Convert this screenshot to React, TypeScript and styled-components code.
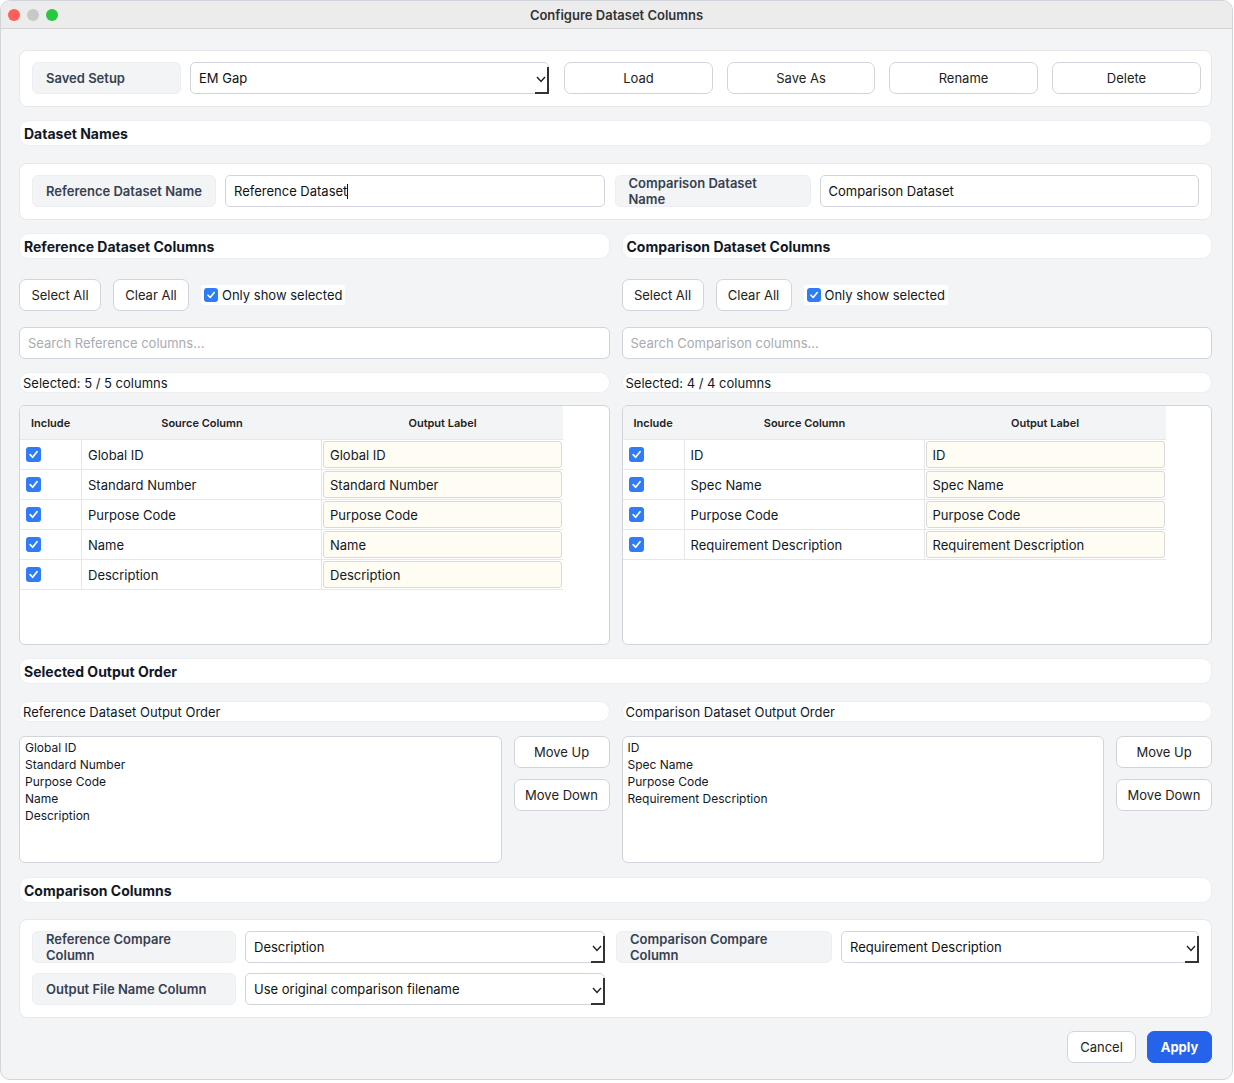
import React from "react";
import styled, { createGlobalStyle } from "styled-components";

const Global = createGlobalStyle`
  html, body { margin: 0; padding: 0; background: #fff; }
  body { font-family: Inter, "Noto Sans", sans-serif; font-size: 13px; color: #111827; }
  * { box-sizing: border-box; }
`;

const Win = styled.div`
  width: 1233px; height: 1080px; background: #f3f4f6;
  border-radius: 10px; overflow: hidden; border: 1px solid #d1d5db;
  display: flex; flex-direction: column;
`;
const TitleBar = styled.div`
  height: 28px; background: #ececec; border-bottom: 1px solid #d4d4d4;
  display: flex; align-items: center; justify-content: center; position: relative;
  font-weight: 600; font-size: 13px; color: #333;
`;
const Lights = styled.div`
  position: absolute; left: 7px; top: 8px; display: flex; gap: 7px;
`;
const Light = styled.span<{ c: string }>`
  width: 12px; height: 12px; border-radius: 50%; background: ${p => p.c};
`;
const Body = styled.div`
  padding: 21px 20px 0 18px; display: flex; flex-direction: column;
`;
const Card = styled.div<{ mt?: number; h?: number }>`
  background: #fff; border: 1px solid #e5e7eb; border-radius: 8px;
  margin-top: ${p => p.mt ?? 0}px; height: ${p => p.h}px;
  padding: 11px 12px; display: flex; flex-direction: column; gap: 10px;
`;
const Row = styled.div<{ gap?: number }>`
  display: flex; align-items: center; gap: ${p => p.gap ?? 9}px;
`;
const Header = styled.div<{ mt: number }>`
  margin-top: ${p => p.mt}px; height: 26px; background: #fff;
  border: 1px solid #eceef1; border-radius: 10px; padding: 0 4px;
  display: flex; align-items: center; font-weight: 700; font-size: 14px; color: #111827;
`;
const SubBar = styled.div<{ mt: number }>`
  margin-top: ${p => p.mt}px; height: 21px; background: #fff;
  border: 1px solid #eceef1; border-radius: 10px; padding: 0 3px;
  display: flex; align-items: center; font-size: 13px; color: #111827;
`;
const Pill = styled.div<{ w: number }>`
  width: ${p => p.w}px; flex: none; height: 32px; border-radius: 6px;
  background: #f3f4f6; border: 1px solid #eceef1; color: #374151;
  font-weight: 600; display: flex; align-items: center; padding: 0 13px;
`;
const Field = styled.div<{ w?: number; grow?: boolean }>`
  ${p => (p.grow ? "flex: 1;" : `width: ${p.w}px; flex: none;`)}
  height: 32px; border: 1px solid #d1d5db; border-radius: 5px; background: #fff;
  display: flex; align-items: center; padding: 0 8px; position: relative; color: #111;
`;
const Caret = styled.span`
  position: absolute; right: -1px; top: 4px; bottom: -1px; width: 14px;
  border-right: 2px solid #333; border-bottom: 2px solid #333; border-bottom-right-radius: 1px;
  display: flex; align-items: center; justify-content: center;
`;
const Btn = styled.button<{ w: number; h?: number; primary?: boolean }>`
  width: ${p => p.w}px; flex: none; height: ${p => p.h ?? 32}px; border-radius: 7px;
  border: 1px solid ${p => (p.primary ? "#2563eb" : "#d1d5db")};
  background: ${p => (p.primary ? "#2563eb" : "#fff")};
  color: ${p => (p.primary ? "#fff" : "#222")};
  font-weight: ${p => (p.primary ? 700 : 400)};
  font-family: inherit; font-size: 13px; padding: 0;
`;
const Cols = styled.div<{ mt: number }>`
  margin-top: ${p => p.mt}px; display: grid; grid-template-columns: 1fr 1fr; column-gap: 12px;
`;
const Col = styled.div`display: flex; flex-direction: column;`;
const Check = styled.span<{ s?: number }>`
  width: ${p => p.s ?? 14}px; height: ${p => p.s ?? 14}px; border-radius: 3px; background: #2f7cf6;
  display: inline-flex; align-items: center; justify-content: center; flex: none;
`;
const CheckLabel = styled.div`
  display: flex; align-items: center; gap: 4px; background: #fff; padding: 2px 3px; border-radius: 3px;
`;
const Search = styled.div`
  margin-top: 16px; height: 32px; border: 1px solid #d1d5db; border-radius: 6px; background: #fff;
  display: flex; align-items: center; padding: 0 8px; color: #a8abb2;
`;
const Table = styled.div`
  margin-top: 12px; height: 240px; background: #fff; border: 1px solid #d1d5db;
  border-radius: 6px; overflow: hidden;
`;
const Grid = styled.div`
  width: 543px; display: grid; grid-template-columns: 62px 240px 241px;
`;
const Th = styled.div<{ left?: boolean }>`
  height: 34px; background: #f3f4f6; font-size: 11px; font-weight: 600; color: #222;
  display: flex; align-items: center; justify-content: ${p => (p.left ? "flex-start" : "center")};
  padding-left: ${p => (p.left ? 11 : 0)}px; border-bottom: 1px solid #e5e7eb;
`;
const Td = styled.div`
  height: 30px; border-bottom: 1px solid #e5e7eb; border-right: 1px solid #e5e7eb;
  display: flex; align-items: center; padding-left: 6px;
`;
const LabelCell = styled.div`
  height: 30px; border-bottom: 1px solid #e5e7eb; padding: 1px;
`;
const LabelInput = styled.div`
  height: 100%; background: #fffcf3; border: 1px solid #d9d9d9; border-radius: 3px;
  display: flex; align-items: center; padding-left: 6px;
`;
const OrderRow = styled.div`
  margin-top: 14px; display: flex; gap: 12px; align-items: flex-start;
`;
const List = styled.div`
  flex: 1; height: 127px; background: #fff; border: 1px solid #d1d5db; border-radius: 6px;
  padding: 2px 5px; line-height: 17px; font-size: 12px;
`;
const BtnCol = styled.div`display: flex; flex-direction: column; gap: 11px;`;
const Footer = styled.div`
  margin-top: 13px; display: flex; justify-content: flex-end; gap: 11px;
`;

const Tick = ({ s = 14 }: { s?: number }) => (
  <Check s={s}>
    <svg width={s - 4} height={s - 4} viewBox="0 0 10 10">
      <path d="M2 5.2 L4.2 7.5 L8.2 2.5" stroke="#fff" strokeWidth="1.6" fill="none" strokeLinecap="round" strokeLinejoin="round" />
    </svg>
  </Check>
);

const Select = ({ w, grow, value }: { w?: number; grow?: boolean; value: string }) => (
  <Field w={w} grow={grow}>
    {value}
    <Caret>
      <svg width="10" height="7" viewBox="0 0 10 7"><path d="M1 1 L5 5.5 L9 1" stroke="#222" strokeWidth="1.4" fill="none" /></svg>
    </Caret>
  </Field>
);

const ColumnPanel = ({ kind, count, rows }: { kind: string; count: number; rows: string[] }) => (
  <Col>
    <Header mt={0} style={undefined}>{kind} Dataset Columns</Header>
    <Row gap={12} style={{ marginTop: 20 }}>
      <Btn w={82}>Select All</Btn>
      <Btn w={76}>Clear All</Btn>
      <CheckLabel><Tick />Only show selected</CheckLabel>
    </Row>
    <Search>Search {kind} columns...</Search>
    <SubBar mt={13}>Selected: {count} / {count} columns</SubBar>
    <Table>
      <Grid>
        <Th left>Include</Th><Th>Source Column</Th><Th>Output Label</Th>
        {rows.map(r => (
          <React.Fragment key={r}>
            <Td><Tick s={15} /></Td>
            <Td>{r}</Td>
            <LabelCell><LabelInput>{r}</LabelInput></LabelCell>
          </React.Fragment>
        ))}
      </Grid>
    </Table>
  </Col>
);

const OrderPanel = ({ title, rows }: { title: string; rows: string[] }) => (
  <Col>
    <SubBar mt={0}>{title}</SubBar>
    <OrderRow>
      <List>{rows.map(r => <div key={r}>{r}</div>)}</List>
      <BtnCol>
        <Btn w={96}>Move Up</Btn>
        <Btn w={96}>Move Down</Btn>
      </BtnCol>
    </OrderRow>
  </Col>
);

const refRows = ["Global ID", "Standard Number", "Purpose Code", "Name", "Description"];
const cmpRows = ["ID", "Spec Name", "Purpose Code", "Requirement Description"];

export default function App() {
  return (
    <>
      <Global />
      <Win>
        <TitleBar>
          <Lights><Light c="#fe5f57" /><Light c="#c8c8c8" /><Light c="#28c840" /></Lights>
          Configure Dataset Columns
        </TitleBar>
        <Body>
          <Card h={57}>
            <Row>
              <Pill w={149}>Saved Setup</Pill>
              <Select w={359} value="EM Gap" />
              <Row gap={14} style={{ marginLeft: 6 }}>
                <Btn w={149}>Load</Btn>
                <Btn w={148}>Save As</Btn>
                <Btn w={149}>Rename</Btn>
                <Btn w={149}>Delete</Btn>
              </Row>
            </Row>
          </Card>
          <Header mt={13}>Dataset Names</Header>
          <Card mt={17} h={57}>
            <Row>
              <Pill w={184}>Reference Dataset Name</Pill>
              <Field grow>Reference Dataset<span style={{ borderLeft: "1px solid #111", height: 15 }} /></Field>
              <Pill w={196} style={{ marginLeft: 1 }}>Comparison Dataset Name</Pill>
              <Field grow>Comparison Dataset</Field>
            </Row>
          </Card>
          <Cols mt={13}>
            <ColumnPanel kind="Reference" count={5} rows={refRows} />
            <ColumnPanel kind="Comparison" count={4} rows={cmpRows} />
          </Cols>
          <Header mt={13}>Selected Output Order</Header>
          <Cols mt={17}>
            <OrderPanel title="Reference Dataset Output Order" rows={refRows} />
            <OrderPanel title="Comparison Dataset Output Order" rows={cmpRows} />
          </Cols>
          <Header mt={14}>Comparison Columns</Header>
          <Card mt={16} h={99}>
            <Row>
              <Pill w={204}>Reference Compare Column</Pill>
              <Select w={360} value="Description" />
              <Pill w={216} style={{ marginLeft: 2 }}>Comparison Compare Column</Pill>
              <Select grow value="Requirement Description" />
            </Row>
            <Row>
              <Pill w={204}>Output File Name Column</Pill>
              <Select w={360} value="Use original comparison filename" />
            </Row>
          </Card>
          <Footer>
            <Btn w={69}>Cancel</Btn>
            <Btn w={65} primary>Apply</Btn>
          </Footer>
        </Body>
      </Win>
    </>
  );
}
